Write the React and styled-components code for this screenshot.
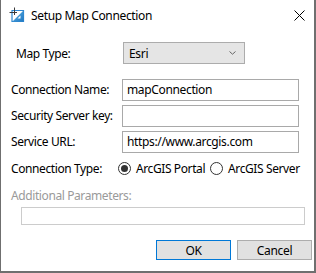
import React from "react";
import styled, { createGlobalStyle } from "styled-components";

const Global = createGlobalStyle`
  html, body { margin: 0; padding: 0; background: #ffffff; }
  body { font-family: "Segoe UI", "Noto Sans", "Open Sans", sans-serif; }
`;

const Dialog = styled.div`
  width: 316px;
  height: 273px;
  box-sizing: border-box;
  background: #ffffff;
  border-left: 1px solid #6f6f6f;
  border-right: 2px solid #6f6f6f;
  border-bottom: 2px solid #6f6f6f;
  display: flex;
  flex-direction: column;
  font-size: 12px;
  color: #000;
`;

const TitleBar = styled.div`
  height: 30px;
  display: flex;
  align-items: center;
  padding-left: 8px;
  padding-right: 9px;
  gap: 6px;
`;

const Title = styled.span`
  flex: 1;
  font-size: 12px;
  letter-spacing: -0.35px;
`;

const CloseBtn = styled.div`
  width: 12px;
  height: 12px;
  display: flex;
  align-items: center;
  justify-content: center;
`;

const Body = styled.div`
  display: flex;
  flex-direction: column;
  padding: 12px 0 0 10px;
`;

const MapTypeRow = styled.div`
  display: flex;
  align-items: center;
  padding-left: 5px;
  height: 22px;
`;

const Label = styled.span`
  width: ${(p) => p.$w || 111}px;
  flex: none;
  font-size: 12px;
  letter-spacing: -0.4px;
  color: ${(p) => (p.$disabled ? "#9a9a9a" : "#000")};
  white-space: nowrap;
`;

const Select = styled.div`
  width: 122px;
  height: 22px;
  box-sizing: border-box;
  border: 1px solid #acacac;
  background: #e5e5e5;
  display: flex;
  align-items: center;
  padding: 0 8px 0 5px;
  justify-content: space-between;
  letter-spacing: -0.3px;
`;

const Fields = styled.div`
  display: flex;
  flex-direction: column;
  gap: 5px;
  margin-top: 15px;
`;

const FieldRow = styled.div`
  display: flex;
  align-items: center;
  height: 21px;
`;

const TextBox = styled.div`
  width: 177px;
  height: 22px;
  box-sizing: border-box;
  border: 1px solid #a9a9a9;
  background: #fff;
  display: flex;
  align-items: center;
  padding-left: 4px;
  letter-spacing: -0.35px;
`;

const RadioRow = styled.div`
  display: flex;
  align-items: center;
  height: 20px;
  margin-top: 6px;
`;

const RadioGroup = styled.div`
  display: flex;
  align-items: center;
  gap: 5px;
  margin-left: -4px;
`;

const RadioItem = styled.div`
  display: flex;
  align-items: center;
  gap: 5px;
  letter-spacing: -0.4px;
`;

const RadioCircle = styled.span`
  width: 13px;
  height: 13px;
  box-sizing: border-box;
  border: 1px solid #333;
  border-radius: 50%;
  display: flex;
  align-items: center;
  justify-content: center;
  &::after {
    content: "";
    width: 7px;
    height: 7px;
    border-radius: 50%;
    background: ${(p) => (p.$checked ? "#333" : "transparent")};
  }
`;

const AddLabelRow = styled.div`
  margin-top: 9px;
  height: 16px;
  display: flex;
  align-items: center;
`;

const DisabledBox = styled.div`
  margin: 4px 0 0 10px;
  width: 284px;
  height: 18px;
  box-sizing: border-box;
  border: 1px solid #cccccc;
  background: #fff;
`;

const ButtonBar = styled.div`
  display: flex;
  justify-content: flex-end;
  gap: 6px;
  margin-top: 15px;
  padding-right: 2px;
`;

const Button = styled.div`
  width: 75px;
  height: 20px;
  box-sizing: border-box;
  border: 1px solid ${(p) => (p.$primary ? "#0078d7" : "#adadad")};
  background: #e1e1e1;
  display: flex;
  align-items: center;
  justify-content: center;
  font-size: 12px;
  letter-spacing: -0.3px;
`;

const AppIcon = () => (
  <svg width="16" height="16" viewBox="0 0 16 16">
    <defs>
      <linearGradient id="g" x1="0" y1="0" x2="1" y2="1">
        <stop offset="0" stopColor="#5fb3e6" />
        <stop offset="1" stopColor="#1f78c2" />
      </linearGradient>
    </defs>
    <path d="M3 3.5 H14.5 V14.5 H3 Z" fill="none" stroke="#2e86cf" strokeWidth="1.2" />
    <path d="M14.5 3.5 L14.5 14.5 L3.5 14.5 Z" fill="url(#g)" />
    <path d="M11.5 8.5 L11.5 11.5 L8.5 11.5 Z" fill="#ffffff" />
    <path d="M0.5 5.5 H8 M5.5 0.5 V8" stroke="#3a3a3a" strokeWidth="1" />
  </svg>
);

const CloseIcon = () => (
  <svg width="11" height="11" viewBox="0 0 11 11">
    <path d="M0.5 0.5 L10.5 10.5 M10.5 0.5 L0.5 10.5" stroke="#000" strokeWidth="1" />
  </svg>
);

const Chevron = () => (
  <svg width="7" height="4" viewBox="0 0 7 4">
    <path d="M0.5 0.5 L3.5 3.2 L6.5 0.5" fill="none" stroke="#666" strokeWidth="1" />
  </svg>
);

export default function App() {
  return (
    <>
      <Global />
      <Dialog>
        <TitleBar>
          <AppIcon />
          <Title>Setup Map Connection</Title>
          <CloseBtn>
            <CloseIcon />
          </CloseBtn>
        </TitleBar>
        <Body>
          <MapTypeRow>
            <Label $w={107}>Map Type:</Label>
            <Select>
              <span>Esri</span>
              <Chevron />
            </Select>
          </MapTypeRow>
          <Fields>
            <FieldRow>
              <Label>Connection Name:</Label>
              <TextBox>mapConnection</TextBox>
            </FieldRow>
            <FieldRow>
              <Label>Security Server key:</Label>
              <TextBox />
            </FieldRow>
            <FieldRow>
              <Label>Service URL:</Label>
              <TextBox>https://www.arcgis.com</TextBox>
            </FieldRow>
          </Fields>
          <RadioRow>
            <Label>Connection Type:</Label>
            <RadioGroup>
              <RadioItem>
                <RadioCircle $checked />
                <span>ArcGIS Portal</span>
              </RadioItem>
              <RadioItem>
                <RadioCircle />
                <span>ArcGIS Server</span>
              </RadioItem>
            </RadioGroup>
          </RadioRow>
          <AddLabelRow>
            <Label $disabled $w={200}>Additional Parameters:</Label>
          </AddLabelRow>
          <DisabledBox />
          <ButtonBar>
            <Button $primary>OK</Button>
            <Button>Cancel</Button>
          </ButtonBar>
        </Body>
      </Dialog>
    </>
  );
}
